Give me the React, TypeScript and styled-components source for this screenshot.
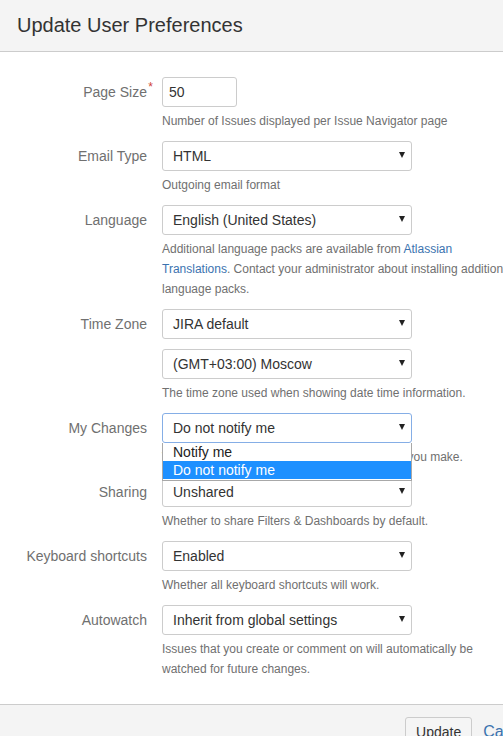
import React from "react";
import styled, { createGlobalStyle } from "styled-components";

const GlobalStyle = createGlobalStyle`
  html, body {
    margin: 0;
    padding: 0;
    overflow: hidden;
    background: #fff;
  }
  body {
    font-family: "Liberation Sans", Arial, sans-serif;
    color: #333;
  }
`;

const Dialog = styled.div`
  width: 540px;
  background: #fff;
`;

const Header = styled.header`
  height: 51px;
  padding: 0 17px;
  background: #f4f4f4;
  border-bottom: 1px solid #cccccc;
  display: flex;
  align-items: center;
`;

const Title = styled.h2`
  margin: 0;
  font-size: 20px;
  font-weight: normal;
  color: #333;
`;

const Form = styled.form`
  padding: 25px 0 15px;
`;

const FieldGroup = styled.div`
  display: grid;
  grid-template-columns: 147px 1fr;
  column-gap: 15px;
  margin-bottom: 10px;
`;

const Label = styled.label`
  position: relative;
  text-align: right;
  font-size: 14px;
  line-height: 30px;
  color: #707070;
  white-space: nowrap;
`;

const Required = styled.span`
  position: absolute;
  right: -6px;
  top: -5px;
  color: #d04437;
  font-size: 12px;
`;

const Field = styled.div`
  position: relative;
  display: flex;
  flex-direction: column;
  gap: 10px;
`;

const TextInput = styled.input`
  box-sizing: border-box;
  width: 75px;
  height: 30px;
  padding: 0 6px;
  border: 1px solid #cccccc;
  border-radius: 3px;
  font-family: inherit;
  font-size: 14px;
  color: #333;
  outline: none;
`;

const SelectBox = styled.div<{ $focused?: boolean }>`
  box-sizing: border-box;
  width: 250px;
  height: 30px;
  padding: 0 10px;
  display: flex;
  align-items: center;
  justify-content: space-between;
  border: 1px solid ${({ $focused }) => ($focused ? "#85aee6" : "#cccccc")};
  border-radius: 3px;
  background: #fff;
  font-size: 14px;
  color: #333;
`;

const Arrow = styled.span`
  width: 0;
  height: 0;
  margin-right: -4px;
  margin-top: -2px;
  border-left: 3px solid transparent;
  border-right: 3px solid transparent;
  border-top: 6px solid #222;
`;

const Description = styled.div`
  max-width: 355px;
  margin-top: -6px;
  font-size: 12px;
  line-height: 20px;
  color: #707070;
`;

const Link = styled.a`
  color: #3b73af;
  text-decoration: none;
`;

const OptionList = styled.ul`
  position: absolute;
  top: 30px;
  left: 0;
  box-sizing: border-box;
  width: 250px;
  margin: 0;
  padding: 0 0 1px;
  list-style: none;
  background: #fff;
  border: 1px solid #a8a8a8;
  border-top: none;
  z-index: 2;
`;

const Option = styled.li<{ $selected?: boolean }>`
  padding: 0 10px;
  font-size: 14px;
  line-height: 18px;
  color: ${({ $selected }) => ($selected ? "#fff" : "#222")};
  background: ${({ $selected }) => ($selected ? "#1e90ff" : "transparent")};
`;

const Footer = styled.footer`
  display: flex;
  justify-content: flex-end;
  align-items: center;
  gap: 11px;
  padding: 12px 7px 12px 0;
  background: #f4f4f4;
  border-top: 1px solid #cccccc;
`;

const Button = styled.button`
  height: 30px;
  padding: 0 10px;
  border: 1px solid #cccccc;
  border-radius: 3px;
  background: #f5f5f5;
  font-family: inherit;
  font-size: 14px;
  color: #333;
`;

const Select: React.FC<{ value: string; focused?: boolean }> = ({ value, focused }) => (
  <SelectBox $focused={focused}>
    <span>{value}</span>
    <Arrow />
  </SelectBox>
);

export default function App() {
  return (
    <Dialog>
      <GlobalStyle />
      <Header>
        <Title>Update User Preferences</Title>
      </Header>
      <Form>
        <FieldGroup>
          <Label>
            Page Size<Required>*</Required>
          </Label>
          <Field>
            <TextInput defaultValue="50" />
            <Description>Number of Issues displayed per Issue Navigator page</Description>
          </Field>
        </FieldGroup>

        <FieldGroup>
          <Label>Email Type</Label>
          <Field>
            <Select value="HTML" />
            <Description>Outgoing email format</Description>
          </Field>
        </FieldGroup>

        <FieldGroup>
          <Label>Language</Label>
          <Field>
            <Select value="English (United States)" />
            <Description>
              Additional language packs are available from <Link href="#">Atlassian Translations</Link>.
              Contact your administrator about installing additional language packs.
            </Description>
          </Field>
        </FieldGroup>

        <FieldGroup>
          <Label>Time Zone</Label>
          <Field>
            <Select value="JIRA default" />
            <Select value="(GMT+03:00) Moscow" />
            <Description>The time zone used when showing date time information.</Description>
          </Field>
        </FieldGroup>

        <FieldGroup>
          <Label>My Changes</Label>
          <Field>
            <Select value="Do not notify me" focused />
            <OptionList>
              <Option>Notify me</Option>
              <Option $selected>Do not notify me</Option>
            </OptionList>
            <Description>Whether to email notifications of any changes you make.</Description>
          </Field>
        </FieldGroup>

        <FieldGroup>
          <Label>Sharing</Label>
          <Field>
            <Select value="Unshared" />
            <Description>Whether to share Filters &amp; Dashboards by default.</Description>
          </Field>
        </FieldGroup>

        <FieldGroup>
          <Label>Keyboard shortcuts</Label>
          <Field>
            <Select value="Enabled" />
            <Description>Whether all keyboard shortcuts will work.</Description>
          </Field>
        </FieldGroup>

        <FieldGroup>
          <Label>Autowatch</Label>
          <Field>
            <Select value="Inherit from global settings" />
            <Description>
              Issues that you create or comment on will automatically be watched for future changes.
            </Description>
          </Field>
        </FieldGroup>
      </Form>
      <Footer>
        <Button type="button">Update</Button>
        <Link href="#">Cancel</Link>
      </Footer>
    </Dialog>
  );
}
